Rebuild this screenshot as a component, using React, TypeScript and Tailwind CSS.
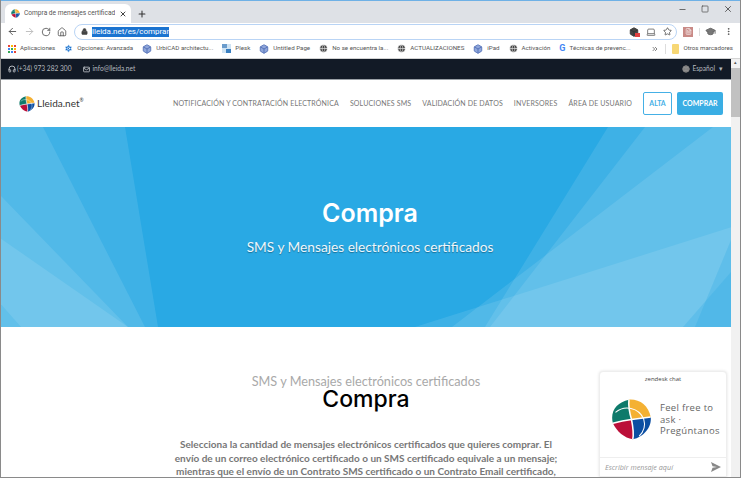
import React from "react";
import { ArrowLeft, ArrowRight, RotateCw, Home, Lock, Star, X, Plus, Minus, Square, MoreVertical, Globe, Mail, Headphones, ChevronsRight, Box, Settings, Laptop, GraduationCap, FileText } from "lucide-react";

const ui = "font-['Roboto',sans-serif]";
const web = "font-['Lato',sans-serif]";

function Logo({ size }: { size: number }) {
  return (
    <svg width={size} height={size} viewBox="-1 -1 64 64" className="shrink-0">
      <path d="M27 0 C44 -1 57 9 61 27 L31 31 C28 21 26 10 27 0 Z" fill="#f4b133" />
      <path d="M31 31 L61 27 C63 43 50 58 33 62 C35 52 33 41 31 31 Z" fill="#0b4ea2" />
      <path d="M31 31 C33 41 35 52 33 62 C20 60 8 50 2 37 C12 34 22 32 31 31 Z" fill="#bb0f39" />
      <path d="M31 31 C22 32 12 34 2 37 C-3 18 8 4 27 0 C26 10 28 21 31 31 Z" fill="#0e7a6b" />
      <path d="M27 0 C26 10 28 21 31 31 C33 41 35 52 33 62 M2 37 C12 34 22 32 31 31 L61 27" stroke="#fff" strokeWidth="2.4" fill="none" />
      <path d="M6 20 C20 8 42 12 50 30 C53 40 50 50 43 57" stroke="#fff" strokeWidth="1.6" fill="none" />
    </svg>
  );
}

function Bookmark({ icon, label }: { icon: React.ReactNode; label: string }) {
  return (
    <div className="flex items-center gap-[4px] shrink-0">
      {icon}
      <span className="text-[6.2px] text-[#555] whitespace-nowrap">{label}</span>
    </div>
  );
}

const appColors = ["bg-[#ea4335]", "bg-[#fbbc05]", "bg-[#ea4335]", "bg-[#4285f4]", "bg-[#34a853]", "bg-[#fbbc05]", "bg-[#34a853]", "bg-[#4285f4]", "bg-[#ea4335]"];

const globe = <Globe size={9} className="text-white shrink-0" fill="#444" strokeWidth={1.5} />;
const box = <Box size={10} className="text-[#4e6cb5] shrink-0" fill="#8fa6da" />;

export default function App() {
  return (
    <div className={`h-[478px] w-[741px] overflow-hidden flex flex-col bg-white border-x border-[#8a8a8a] border-b ${ui}`}>
      {/* tab strip */}
      <div className="h-[23px] shrink-0 bg-[#dee1e6] border-t border-[#6fb1e6] flex items-end pl-[4px]">
        <div className="h-[19px] w-[126px] bg-white rounded-t-[6px] flex items-center pl-[6px] pr-[4px] gap-[4px]">
          <Logo size={9} />
          <span className="text-[6.6px] text-[#555] whitespace-nowrap flex-1 min-w-0 overflow-hidden">Compra de mensajes certificados</span>
          <X size={8} strokeWidth={3} className="text-[#444] shrink-0" />
        </div>
        <Plus size={10} strokeWidth={2.5} className="text-[#333] ml-[6px] mb-[4px]" />
        <div className="ml-auto flex items-center self-start mt-[3px] gap-[14px] pr-[7px]">
          <Minus size={9} className="text-[#444]" />
          <Square size={8} className="text-[#444]" />
          <X size={10} className="text-[#444]" />
        </div>
      </div>
      {/* toolbar */}
      <div className="h-[17px] shrink-0 bg-white flex items-center pl-[6px]">
        <ArrowLeft size={11} className="text-[#555]" />
        <ArrowRight size={11} className="text-[#bbb] ml-[6px]" />
        <RotateCw size={10} className="text-[#555] ml-[6px]" />
        <Home size={10} className="text-[#555] ml-[6px]" />
        <div className="h-[16px] ml-[7px] w-[603px] rounded-full border border-[#b9d4f5] flex items-center pl-[6px] pr-[4px]">
          <Lock size={7} className="text-[#444]" fill="#444" />
          <span className="text-[8px] leading-[10px] bg-[#1a73d0] text-white ml-[4px]">lleida.net/es/comprar</span>
          <div className="ml-auto flex items-center gap-[7px]">
            <div className="relative">
              <Box size={10} className="text-[#333]" fill="#444" />
              <div className="absolute right-[-1px] bottom-0 w-[5px] h-[4px] bg-[#e04040]" />
            </div>
            <Laptop size={10} className="text-[#666]" />
            <Star size={9} className="text-[#444]" />
          </div>
        </div>
        <div className="w-[10px] h-[10px] bg-[#c98a86] ml-[6px] flex items-center justify-center">
          <FileText size={7} className="text-white" />
        </div>
        <div className="w-px h-[8px] bg-[#ddd] ml-[6px]" />
        <GraduationCap size={11} className="text-[#666] ml-[5px]" fill="#777" />
        <MoreVertical size={9} className="text-[#444] ml-[8px]" />
      </div>
      {/* bookmarks */}
      <div className="h-[19px] shrink-0 bg-white border-b border-[#d4d4d4] flex items-center pl-[7px] pr-[7px] gap-[9px]">
        <Bookmark
          icon={
            <div className="w-[8px] h-[8px] grid grid-cols-3 gap-px">
              {appColors.map((c, i) => (
                <div key={i} className={c} />
              ))}
            </div>
          }
          label="Aplicaciones"
        />
        <Bookmark icon={<Settings size={9} className="text-white" fill="#1a73d0" />} label="Opciones: Avanzada" />
        <Bookmark icon={box} label="UrbiCAD architectu..." />
        <Bookmark
          icon={
            <div className="w-[9px] h-[9px] bg-[#cfe3f3] flex flex-wrap">
              <div className="w-[5px] h-[4px] bg-[#6b9ccc]" />
              <div className="ml-auto mt-auto w-[5px] h-[4px] bg-[#3a7fc0]" />
            </div>
          }
          label="Plesk"
        />
        <Bookmark icon={box} label="Untitled Page" />
        <Bookmark icon={globe} label="No se encuentra la..." />
        <Bookmark icon={globe} label="ACTUALIZACIONES" />
        <Bookmark icon={box} label="iPad" />
        <Bookmark icon={globe} label="Activación" />
        <Bookmark icon={<span className="text-[9px] leading-[9px] font-bold text-[#4285f4]">G</span>} label="Técnicas de prevenc..." />
        <div className="ml-auto flex items-center gap-[6px]">
          <ChevronsRight size={8} className="text-[#444]" />
          <div className="w-px h-[10px] bg-[#ddd]" />
          <Bookmark icon={<div className="w-[7px] h-[10px] rounded-[1px] bg-[#f7d774]" />} label="Otros marcadores" />
        </div>
      </div>
      {/* page + scrollbar */}
      <div className="flex-1 min-h-0 flex">
        <div className={`relative flex-1 min-w-0 flex flex-col ${web}`}>
          <div className="h-[20px] shrink-0 bg-[#121a26] flex items-center pl-[7px] pr-[8px] text-[6.6px] text-[#b5b9bf]">
            <Headphones size={8} strokeWidth={3} />
            <span className="ml-[1px]">(+34) 973 282 300</span>
            <Mail size={7} className="ml-[12px]" strokeWidth={3} />
            <span className="ml-[2px]">info@lleida.net</span>
            <Globe size={8} className="ml-auto text-[#777]" fill="#999" />
            <span className="ml-[2px]">Español</span>
            <span className="ml-[4px]">▾</span>
          </div>
          <div className="h-[48px] shrink-0 bg-white flex items-center pl-[18px] pr-[8px] border-t border-[#9aa0a6]">
            <Logo size={16} />
            <span className="text-[10px] text-[#333] ml-[2px]">Lleida.net</span>
            <span className="text-[5px] text-[#333] mb-[6px]">®</span>
            <nav className="ml-auto flex items-center gap-[11px] text-[7px] tracking-[0.15px] text-[#777]">
              <span>NOTIFICACIÓN Y CONTRATACIÓN ELECTRÓNICA</span>
              <span>SOLUCIONES SMS</span>
              <span>VALIDACIÓN DE DATOS</span>
              <span>INVERSORES</span>
              <span>ÁREA DE USUARIO</span>
            </nav>
            <div className="ml-[11px] h-[23px] w-[29px] rounded-[2px] border border-[#45b0e6] flex items-center justify-center text-[7px] font-bold text-[#45b0e6]">ALTA</div>
            <div className="ml-[5px] h-[23px] w-[46px] rounded-[2px] bg-[#3aaee4] flex items-center justify-center text-[7px] font-bold text-white">COMPRAR</div>
          </div>
          {/* hero */}
          <div className="relative h-[200px] shrink-0 bg-[#29a9e4] flex flex-col items-center overflow-hidden pl-[8px]">
            <svg className="absolute inset-0" width="730" height="200" viewBox="1 127 730 200">
              <g fill="#fff" fillOpacity="0.1">
                <polygon points="0,127 125,127 158,327 0,327" />
                <polygon points="0,127 43,127 145,327 0,327" />
                <polygon points="0,195 128,327 0,327" />
                <polygon points="0,238 128,327 21,327 0,303" />
                <polygon points="608,127 731,127 731,327 485,327" />
                <polygon points="645,127 731,127 731,327 490,327" />
                <polygon points="713,127 731,127 731,327 452,327" />
                <polygon points="732,227 732,327 415,327" />
              </g>
              <g fill="#29a9e4" fillOpacity="0.25">
                <polygon points="731,240 731,327 695,327" />
                <polygon points="731,272 731,327 683,327" />
              </g>
            </svg>
            <h1 className="relative mt-[71px] text-[25px] leading-[30px] font-semibold font-['Inter',sans-serif] text-white">Compra</h1>
            <p className="relative mt-[10px] text-[13.7px] leading-[18px] text-[#eef7fc] [text-shadow:0_1px_1px_rgba(0,0,0,0.35)]">SMS y Mensajes electrónicos certificados</p>
          </div>
          {/* content */}
          <div className="flex-1 min-h-0 overflow-hidden flex flex-col items-center bg-white">
            <p className="mt-[46px] text-[12.7px] leading-[16px] text-[#a9a9a9]">SMS y Mensajes electrónicos certificados</p>
            <h2 className="text-[23px] leading-[20px] font-medium font-['Inter',sans-serif] text-black">Compra</h2>
            <div className="mt-[17px] w-[27px] h-px bg-[#3aaee4]" />
            <p className="mt-[12px] w-[385px] text-center text-[10px] leading-[13.5px] font-bold text-[#777]">Selecciona la cantidad de mensajes electrónicos certificados que quieres comprar. El envío de un correo electrónico certificado o un SMS certificado equivale a un mensaje; mientras que el envío de un Contrato SMS certificado o un Contrato Email certificado, equivale a cinco mensajes.</p>
          </div>
          {/* chat widget */}
          <div className="absolute right-[4px] bottom-0 w-[128px] h-[106px] bg-white border border-[#eee] rounded-t-[4px] shadow-[0_0_3px_rgba(0,0,0,0.12)] flex flex-col font-['Open_Sans',sans-serif]">
            <div className="text-center text-[6px] leading-[8px] mt-[3px] text-[#444]">zendesk chat</div>
            <div className="flex-1 flex items-center pl-[11px] gap-[8px] pb-[1px]">
              <Logo size={41} />
              <div className="text-[9.5px] leading-[11.7px] text-[#666] tracking-[0.3px]">Feel free to ask · Pregúntanos</div>
            </div>
            <div className="h-[19px] border-t border-[#eee] flex items-center justify-between pl-[5px] pr-[5px]">
              <span className="text-[7.2px] italic text-[#999]">Escribir mensaje aquí</span>
              <svg width="10" height="10" viewBox="0 0 10 10">
                <polygon points="0,0 10,5 0,10 1.5,5.8 6,5 1.5,4.2" fill="#888" />
              </svg>
            </div>
          </div>
        </div>
        <div className="w-[9px] shrink-0 bg-[#f1f1f1] flex flex-col">
          <div className="h-[9px] text-[5px] text-center text-[#555]">▴</div>
          <div className="h-[49px] bg-[#c1c1c1]" />
        </div>
      </div>
    </div>
  );
}
